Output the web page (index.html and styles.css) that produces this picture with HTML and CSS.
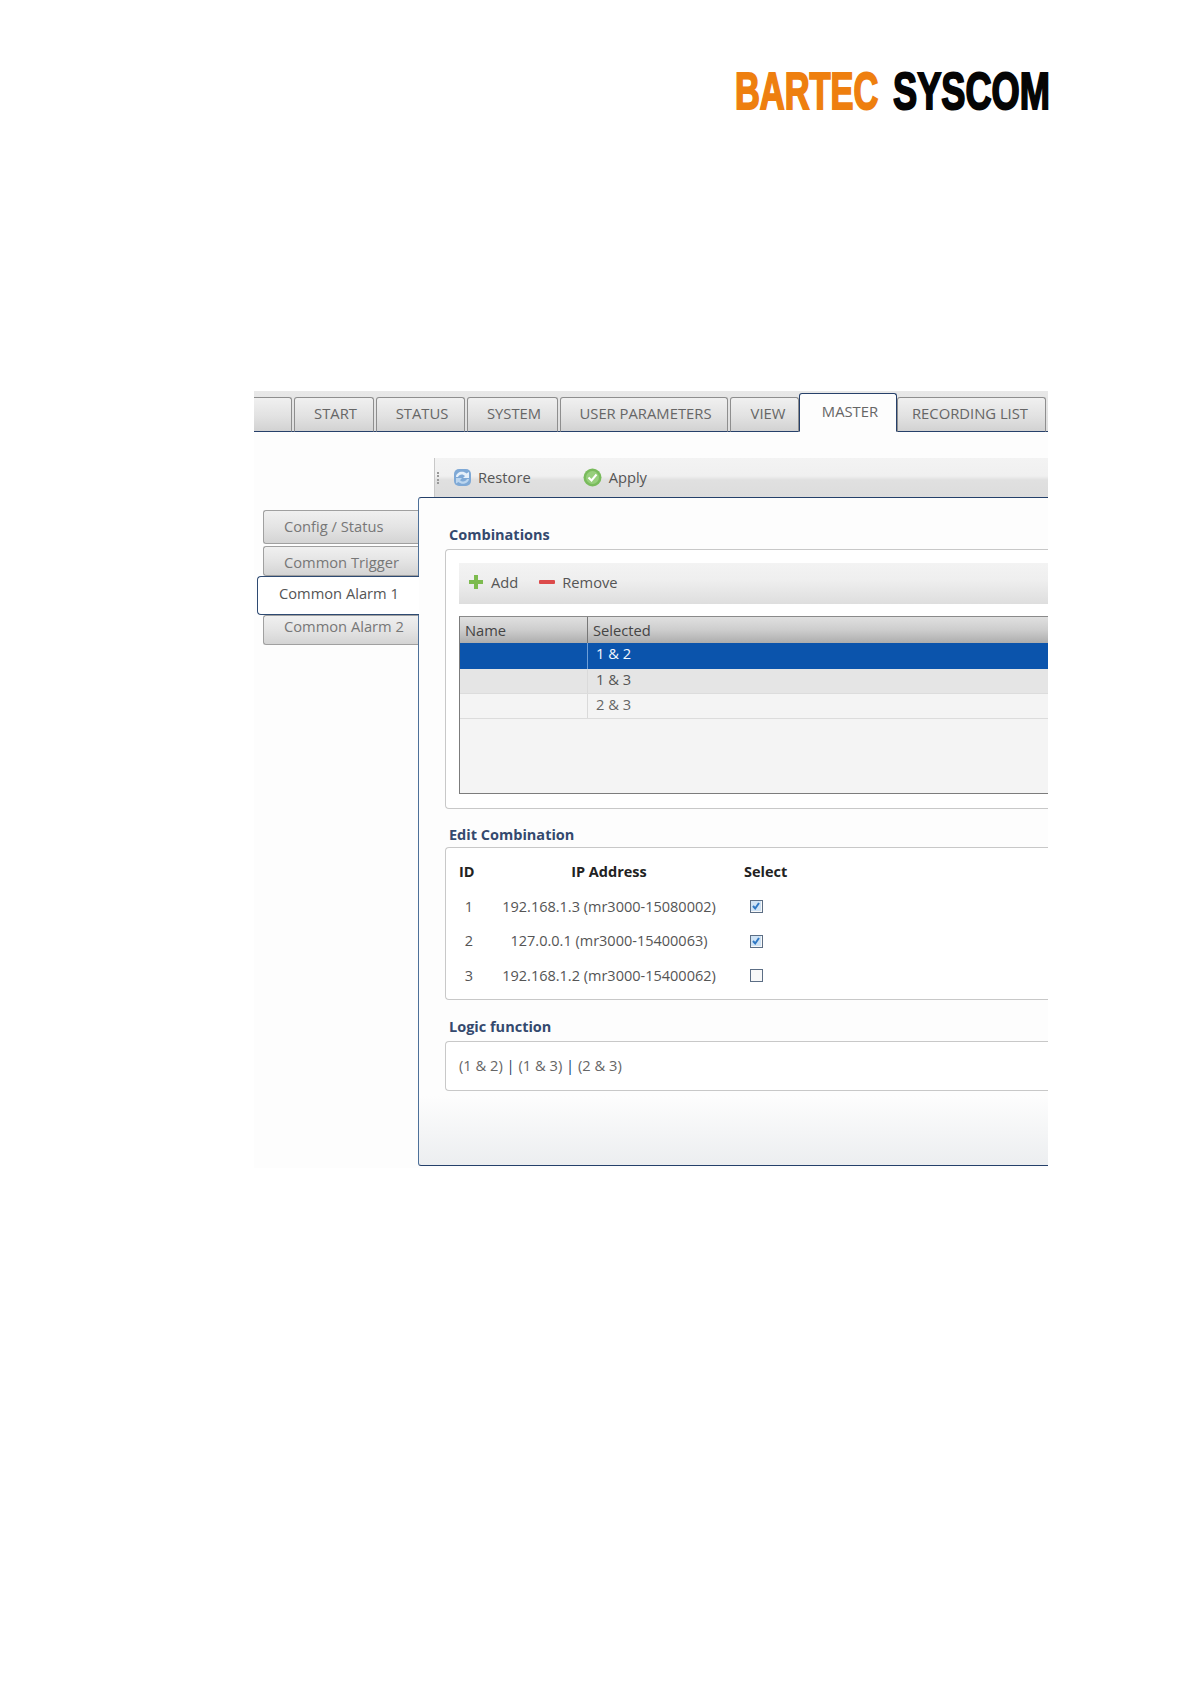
FILE: index.html
```html
<!DOCTYPE html>
<html lang="en">
<head>
<meta charset="utf-8">
<title>Common Alarm 1</title>
<link rel="stylesheet" href="styles.css">
</head>
<body>
<header class="logo"><span class="logo-word orange">BARTEC</span><span class="logo-word black">SYSCOM</span></header>
<main class="app">
  <nav class="tabs">
    <div class="tab blank"></div>
    <div class="tab w-start">START</div>
    <div class="tab w-status">STATUS</div>
    <div class="tab w-system">SYSTEM</div>
    <div class="tab w-user">USER PARAMETERS</div>
    <div class="tab w-view">VIEW</div>
    <div class="tab active w-master">MASTER</div>
    <div class="tab w-rec">RECORDING LIST</div>
  </nav>
  <div class="toolbar">
    <span class="grip"></span>
    <svg width="19" height="19" viewBox="0 0 19 19"><rect x="1" y="1" width="17" height="17" rx="5" fill="#7fa9d6"/><path d="M3 9c0-5 7-7 10.500-3.500L16 4v6h-6l2-2c-2-2.500-6-2-7 1z" fill="#e6f0fa"/><path d="M16 11c-.5 4.500-7 6.500-10.500 3L3 15.500V10h6l-2 2.200c2 2 6 1.600 7-1.200z" fill="#bcd6ef"/></svg>
    <span class="tool-label restore-label">Restore</span>
    <svg width="19" height="19" viewBox="0 0 19 19"><circle cx="9.5" cy="9.5" r="9" fill="#79bb5c"/><circle cx="9.5" cy="9.5" r="6.5" fill="#97cf7c"/><path d="M5.5 9.500l3 3 5-6" fill="none" stroke="#fff" stroke-width="2"/></svg>
    <span class="tool-label apply-label">Apply</span>
  </div>
  <div class="body">
    <aside class="side">
      <div class="side-tab s-config">Config / Status</div>
      <div class="side-tab s-trigger">Common Trigger</div>
      <div class="side-tab active">Common Alarm 1</div>
      <div class="side-tab s-alarm2">Common Alarm 2</div>
    </aside>
    <section class="panel">
      <h2 class="legend first">Combinations</h2>
      <div class="group combos">
        <div class="subbar">
          <svg width="14" height="14" viewBox="0 0 14 14"><path d="M5 0h4v5h5v4H9v5H5V9H0V5h5z" fill="#7dbb4f"/></svg>
          <span class="tool-label add-label">Add</span>
          <svg width="16" height="4" viewBox="0 0 16 4"><rect width="16" height="4" rx="1" fill="#dc4a4a"/></svg>
          <span class="tool-label">Remove</span>
        </div>
        <div class="grid">
          <div class="g-row g-head"><div class="g-name">Name</div><div class="g-sel">Selected</div></div>
          <div class="g-row g-on"><div class="g-name"></div><div class="g-val">1 &amp; 2</div></div>
          <div class="g-row g-alt"><div class="g-name"></div><div class="g-val">1 &amp; 3</div></div>
          <div class="g-row g-plain"><div class="g-name"></div><div class="g-val">2 &amp; 3</div></div>
        </div>
      </div>
      <h2 class="legend">Edit Combination</h2>
      <div class="group edit">
        <table class="nodes">
          <thead><tr><th class="c-id">ID</th><th class="c-ip">IP Address</th><th class="c-select">Select</th></tr></thead>
          <tbody>
            <tr><td class="c-id">1</td><td class="c-ip">192.168.1.3 (mr3000-15080002)</td><td class="c-check"><span class="check on"><svg width="10" height="10" viewBox="0 0 10 10"><rect width="10" height="10" fill="#cfe3f5"/><path d="M2 5l2.200 2.500L8 2" fill="none" stroke="#2f78c4" stroke-width="2"/></svg></span></td></tr>
            <tr><td class="c-id">2</td><td class="c-ip">127.0.0.1 (mr3000-15400063)</td><td class="c-check"><span class="check on"><svg width="10" height="10" viewBox="0 0 10 10"><rect width="10" height="10" fill="#cfe3f5"/><path d="M2 5l2.200 2.500L8 2" fill="none" stroke="#2f78c4" stroke-width="2"/></svg></span></td></tr>
            <tr><td class="c-id">3</td><td class="c-ip">192.168.1.2 (mr3000-15400062)</td><td class="c-check"><span class="check"></span></td></tr>
          </tbody>
        </table>
      </div>
      <h2 class="legend last">Logic function</h2>
      <div class="group logic">(1 &amp; 2) <span class="pipe">|</span> (1 &amp; 3) <span class="pipe">|</span> (2 &amp; 3)</div>
    </section>
  </div>
</main>
</body>
</html>
```
FILE: styles.css
```css
* { box-sizing: border-box; }
html, body { margin: 0; padding: 0; }
body {
  background: #fff;
  font-family: "Open Sans", "Noto Sans", sans-serif;
  font-size: 14.7px;
  color: #555;
  height: 1684px;
  overflow: hidden;
}

/* Logo */
.logo {
  height: 391px;
  padding: 66px 141px 0 0;
  display: flex;
  justify-content: flex-end;
  gap: 15px;
}
.logo-word {
  font-family: "Liberation Sans", sans-serif;
  font-weight: 700;
  font-size: 51px;
  line-height: 52px;
  height: 52px;
  display: block;
  white-space: nowrap;
  transform-origin: left center;
  -webkit-text-stroke: 2px currentColor;
}
.orange { color: #ee7f0f; width: 143px; transform: scaleX(0.675); }
.black { color: #050505; width: 156px; transform: scaleX(0.71); }

/* App */
.app {
  margin-left: 254px;
  width: 794px;
  height: 777px;
  background: #fdfdfd;
}
.tabs {
  height: 41px;
  display: flex;
  align-items: flex-end;
  gap: 2px;
  background: linear-gradient(#e8e8e8, #dedede);
  border-bottom: 1px solid #26406a;
}
.tab {
  height: 35px;
  margin-bottom: -1px;
  padding: 5px 0 0 3px;
  text-align: center;
  font-size: 14.8px;
  line-height: 20px;
  color: #666;
  background: linear-gradient(#f0f0f0, #e2e2e2 55%, #d2d2d2);
  border: 1px solid #8e8e8e;
  border-bottom: 1px solid #26406a;
  border-radius: 3px 3px 0 0;
  white-space: nowrap;
}
.tab.blank { width: 38px; border-left: 0; border-radius: 0 3px 0 0; }
.w-start { width: 80px; }
.w-status { width: 89px; }
.w-system { width: 91px; }
.w-user { width: 168px; }
.w-view { width: 69px; margin-right: -2px; padding-left: 7px; }
.tab.active {
  height: 39px;
  padding-top: 7px;
  padding-left: 4px;
  background: #fdfdfd;
  border: 1px solid #26406a;
  border-bottom: 1px solid #fdfdfd;
  z-index: 1;
}
.w-master { width: 98px; margin-right: -2px; }
.w-rec { width: 149px; padding: 5px 3px 0 0; }

.toolbar {
  margin: 26px 0 0 180px;
  height: 40px;
  display: flex;
  align-items: center;
  padding: 0 0 2px 18px;
  background: linear-gradient(#f3f3f3, #f0f0f0 45%, #e0e0e0 55%, #dcdcdc);
  border-left: 1px solid #c8c8c8;
  position: relative;
}
.grip {
  position: absolute;
  left: 2px;
  top: 14px;
  width: 2px;
  height: 12px;
  border-left: 2px dotted #999;
}
.tool-label { line-height: 20px; color: #555; margin-left: 6px; }
.restore-label { margin-right: 52px; }
.apply-label { margin-left: 7px; }
.subbar .tool-label { margin-left: 7px; }
.subbar .add-label { margin-left: 8px; margin-right: 21px; }

.body { display: flex; align-items: flex-start; }
.side {
  width: 164px;
  padding-top: 12px;
  display: flex;
  flex-direction: column;
  align-items: flex-end;
}
.side-tab {
  width: 155px;
  padding-left: 20px;
  color: #777;
  background: linear-gradient(#f0f0f0, #e4e4e4 50%, #d4d4d4);
  border: 1px solid #a0a0a0;
  border-right: 0;
  border-radius: 3px 0 0 3px;
}
.s-config { height: 34px; line-height: 30px; margin-bottom: 2px; }
.s-trigger { height: 30px; line-height: 30px; }
.s-alarm2 { height: 30px; line-height: 20px; }
.side-tab.active {
  width: 162px;
  height: 39px;
  line-height: 33px;
  padding-left: 21px;
  margin-right: -1px;
  color: #555;
  background: #fff;
  border: 1px solid #2e4a72;
  border-right: 0;
  border-radius: 4px 0 0 4px;
  position: relative;
  z-index: 2;
}

.panel {
  flex: 1;
  height: 669px;
  margin-top: -1px;
  padding: 21px 0 0 26px;
  background: linear-gradient(#fdfdfd, #fdfdfd 598px, #eceef0);
  border: 1px solid #24406a;
  border-left-color: #4d7099;
  border-right: 0;
  border-radius: 3px 0 0 3px;
  position: relative;
}
.legend {
  margin: 0 0 0 4px;
  font-size: 14.5px;
  line-height: 36px;
  height: 30px;
  font-weight: 700;
  color: #34496e;
}
.legend.first { line-height: 32px; }
.legend.last { line-height: 32px; }
.group {
  background: #fff;
  border: 1px solid #c8c8c8;
  border-right: 0;
  border-radius: 4px 0 0 4px;
}
.combos { height: 260px; padding: 13px 0 0 13px; margin-bottom: 8px; }
.subbar {
  height: 41px;
  display: flex;
  align-items: center;
  padding: 0 0 3px 10px;
  background: linear-gradient(#f3f3f3, #efefef 40%, #dedede);
}
.subbar svg { flex: none; }
.grid {
  margin-top: 12px;
  height: 178px;
  background: #f4f4f4;
  border: 1px solid #7c7c7c;
  border-right: 0;
  border-top-color: #8a8a8a;
}
.g-row { display: flex; height: 25px; border-bottom: 1px solid #dcdcdc; }
.g-name { width: 128px; padding-left: 5px; border-right: 1px solid #dadada; flex: none; }
.g-sel { padding-left: 5px; }
.g-val { padding-left: 8px; line-height: 21px; }
.g-head {
  height: 26px;
  line-height: 26px;
  color: #444;
  background: linear-gradient(#e0e0e0, #cdcdcd 50%, #adadad);
  border-bottom: 0;
}
.g-head .g-name { border-right: 1px solid #777; }
.g-on { height: 26px; background: #0b54ac; color: #f4f8ff; border-bottom: 0; }
.g-on .g-name { border-right-color: #6e9fd8; }
.g-alt { background: #e5e5e5; color: #555; }
.g-plain { background: #f4f4f4; color: #666; }

.edit { height: 153px; padding-top: 3px; margin-bottom: 11px; }
.nodes { border-collapse: collapse; table-layout: fixed; }
.nodes th { font-size: 14.5px; font-weight: 700; color: #222; height: 38px; padding: 2px 0 0; }
.nodes td { height: 34.500px; padding: 0; color: #555; font-size: 14.5px; }
.c-id { width: 46px; text-align: center; }
.nodes th.c-id { text-align: left; padding-left: 13px; }
.c-ip { width: 234px; text-align: center; }
.nodes th.c-select { text-align: left; width: 80px; padding-left: 18px; }
.nodes td.c-check { padding-left: 24px; }
.check {
  display: block;
  width: 13px;
  height: 13px;
  margin-top: 1px;
  border: 1.500px solid #5c6e85;
  background: #f8f8f8;
  overflow: hidden;
}
.check svg { display: block; }

.logic { height: 50px; padding-left: 13px; line-height: 46px; color: #666; }
.pipe { color: #26406a; }
```
